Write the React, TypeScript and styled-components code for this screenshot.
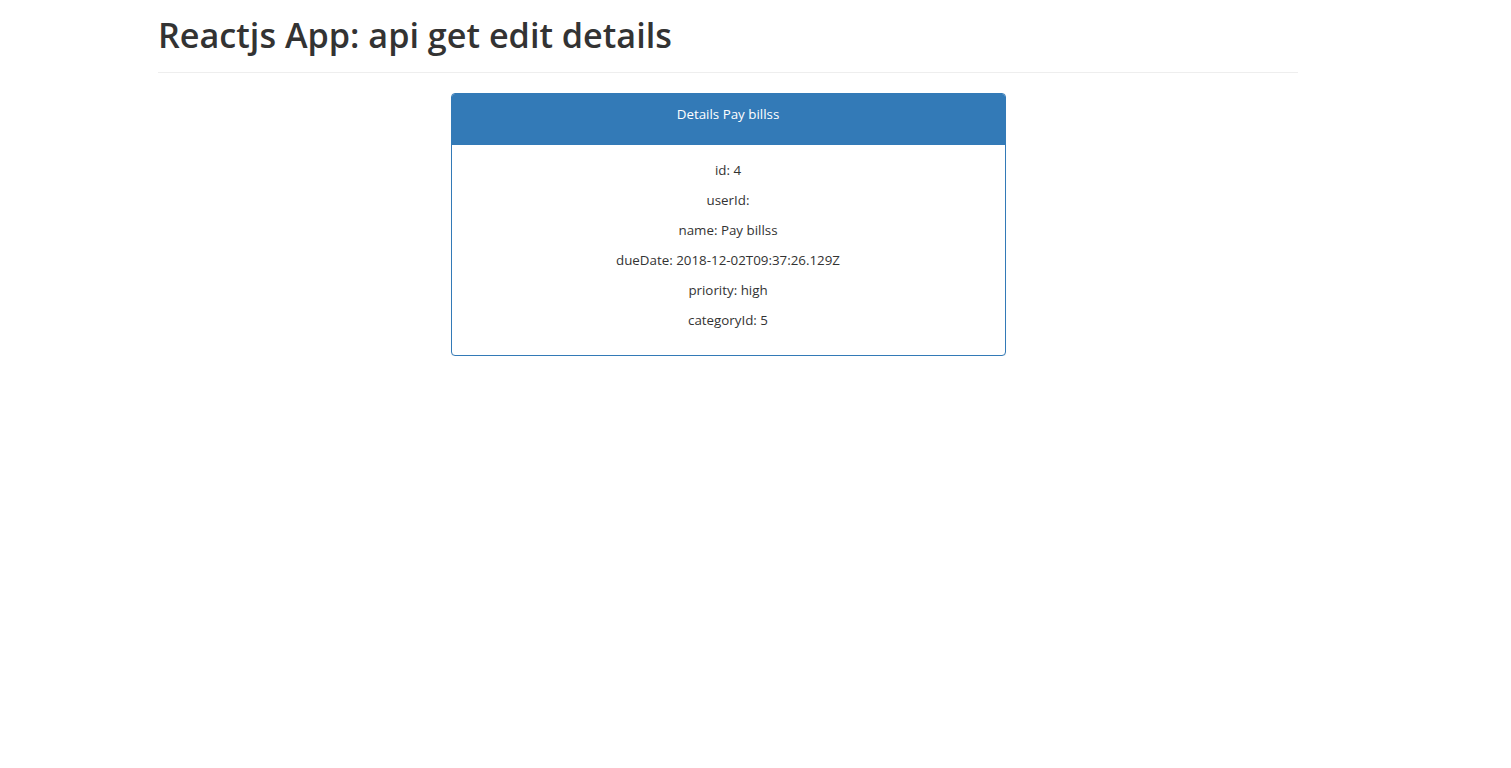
import React from "react";
import styled, { createGlobalStyle } from "styled-components";

const GlobalStyle = createGlobalStyle`
  html, body { margin: 0; padding: 0; background: #fff; }
  body {
    font-family: "Open Sans", "Noto Sans", "Liberation Sans", sans-serif;
    font-size: 13.35px;
    line-height: 20px;
    color: #333;
  }
`;

const Page = styled.div`
  width: 1456px;
`;

const Container = styled.div`
  width: 1140px;
  margin: 0 auto;
  padding: 0 15px;
`;

const Title = styled.h1`
  margin: 13px 0 0;
  font-size: 34.2px;
  line-height: 44px;
  font-weight: 600;
  color: #333;
  letter-spacing: 0;
`;

const Rule = styled.hr`
  margin: 15px 0 20px;
  border: 0;
  border-top: 1px solid #eee;
`;

const Row = styled.div`
  display: flex;
  justify-content: center;
`;

const Panel = styled.div`
  width: 553px;
  border: 1px solid #337ab7;
  border-radius: 4px;
  background: #fff;
  box-shadow: 0 1px 1px rgba(0, 0, 0, 0.05);
`;

const PanelHeading = styled.div`
  background: #337ab7;
  color: #fff;
  text-align: center;
  padding: 10px 15px 21px;
  line-height: 20px;
  border-top-left-radius: 3px;
  border-top-right-radius: 3px;
`;

const PanelBody = styled.div`
  padding: 15px;
  text-align: center;
`;

const Field = styled.p`
  margin: 0 0 10px;
  line-height: 20px;
`;

const data: [string, string][] = [
  ["id", "4"],
  ["userId", ""],
  ["name", "Pay billss"],
  ["dueDate", "2018-12-02T09:37:26.129Z"],
  ["priority", "high"],
  ["categoryId", "5"],
];

export default function App() {
  return (
    <Page>
      <GlobalStyle />
      <Container>
        <Title>Reactjs App: api get edit details</Title>
        <Rule />
        <Row>
          <Panel>
            <PanelHeading>Details Pay billss</PanelHeading>
            <PanelBody>
              {data.map(([k, v]) => (
                <Field key={k}>
                  {k}: {v}
                </Field>
              ))}
            </PanelBody>
          </Panel>
        </Row>
      </Container>
    </Page>
  );
}
